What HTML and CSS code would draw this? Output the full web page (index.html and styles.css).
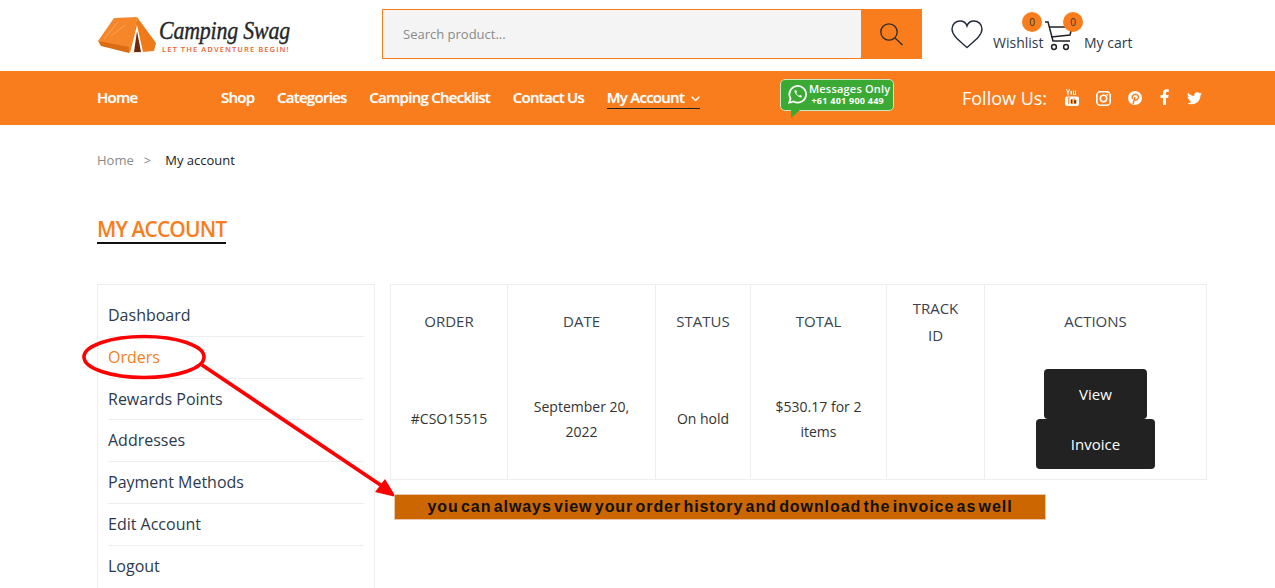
FILE: index.html
```html
<!DOCTYPE html>
<html lang="en">
<head>
<meta charset="utf-8">
<title>My account – Camping Swag</title>
<link rel="stylesheet" href="styles.css">
</head>
<body>
<div class="page">
  <header class="topbar">
    <a class="logo">
      <svg class="tent" width="60" height="38" viewBox="0 0 60 38">
        <path d="M17 2 L40 1 L34 37 L1 25 Z" fill="#f5872a"/>
        <path d="M1 25 L32 31 L32 37 L4 30 Z" fill="#d96c14"/>
        <path d="M21 6 L7 23 M28 9 L14 20" stroke="#fbb06e" stroke-width=".7" fill="none"/>
        <path d="M40 1 L59 27 L57 35 L33 37 Z" fill="#ee7a1a"/>
        <path d="M40 9 L33 37 L46 36 Z" fill="#fff"/>
        <path d="M40 15 L37 36 L44 36 Z" fill="#6d2a0c"/>
      </svg>
      <span class="logo-text">
        <span class="logo-name">Camping Swag</span>
        <span class="logo-tag">LET THE ADVENTURE BEGIN!</span>
      </span>
    </a>
    <form class="search">
      <span class="search-input">Search product...</span>
      <span class="search-btn">
        <svg width="24" height="24" viewBox="0 0 24 24" fill="none" stroke="#2b2b2b" stroke-width="1.3"><circle cx="10" cy="10" r="8.2"/><path d="M16 16 L23.5 23"/></svg>
      </span>
    </form>
    <div class="shop-links">
      <svg class="heart" width="32" height="29" viewBox="0 0 32 29" fill="none" stroke="#222b3a" stroke-width="1.4"><path d="M16 27.5 C10 22 1 16 1 9 C1 4 5 1 9 1 C12 1 15 3 16 6 C17 3 20 1 23 1 C27 1 31 4 31 9 C31 16 22 22 16 27.5 Z"/></svg>
      <span class="link-label wish">Wishlist<span class="badge">0</span></span>
      <span class="cart">
        <svg width="28" height="30" viewBox="0 0 28 30" fill="none" stroke="#222" stroke-width="1.5"><path d="M0 1 H3 L8 20 H25"/><path d="M4 6 H27 L25 14 L6 16"/><circle cx="9" cy="26" r="2.4"/><circle cx="21" cy="26" r="2.4"/></svg>
        <span class="badge">0</span>
      </span>
      <span class="link-label">My cart</span>
    </div>
  </header>

  <nav class="mainnav">
    <ul class="menu">
      <li class="m-home">Home</li>
      <li>Shop</li>
      <li>Categories</li>
      <li>Camping Checklist</li>
      <li>Contact Us</li>
      <li class="active">My Account
        <svg width="9" height="6" viewBox="0 0 9 6" fill="none" stroke="#fff" stroke-width="1.4"><path d="M.7 .8 L4.5 4.6 L8.3 .8"/></svg>
      </li>
    </ul>
    <div class="wa">
      <svg width="21" height="21" viewBox="0 0 24 24" fill="none" stroke="#fff" stroke-width="2"><path d="M2.5 21.5 L4 16.5 A9.5 9.5 0 1 1 7.5 20 Z"/><path d="M8.5 7.5 C8 10 13 16 16.5 15.5 L17 13.5 L14.8 12.5 L13.8 13.5 C12.5 13 11 11.5 10.5 10.2 L11.5 9.2 L10.5 7 Z" fill="#fff" stroke="none"/></svg>
      <span class="wa-text"><span class="wa-top">Messages Only</span><span class="wa-num">+61 401 900 449</span></span>
    </div>
    <div class="follow">
      <span class="follow-label">Follow Us:</span>
      <svg class="s-yt" width="14" height="17" viewBox="0 0 14 17"><path fill="#fff" d="M2 0 L3 3 L4 0 H5 L3.5 4 V6.5 H2.5 V4 L1 0 Z M5.5 2 H7 V5.5 H5.5 Z M8 1.5 H9 V5 H10 V1.5 H11 V6 H8 Z"/><rect fill="#fff" y="7.5" width="14" height="9.5" rx="2"/><path stroke="#f97d1c" stroke-width=".9" d="M2.5 9 H5 M3.7 9 V15 M6 10.5 V14.5 H7.5 V10.5 M9 9 V14.5 M9 11 H11 V14.5 H9"/></svg>
      <svg class="s-ig" width="15" height="15" viewBox="0 0 15 15" fill="none" stroke="#fff" stroke-width="1.6"><rect x=".8" y=".8" width="13.4" height="13.4" rx="3.5"/><circle cx="7.5" cy="7.5" r="3.2"/><circle cx="11.3" cy="3.7" r=".6" fill="#fff" stroke-width=".6"/></svg>
      <svg class="s-pi" width="14" height="14" viewBox="0 0 14 14"><circle cx="7" cy="7" r="7" fill="#fff"/><path d="M5 13 L7 6 M4.6 8 C3.2 5.2 5.2 3.2 7.4 3.2 C10 3.2 10.8 5.4 10 7.4 C9.2 9.4 7 9.4 6.4 8.2" fill="none" stroke="#f97d1c" stroke-width="1.4"/></svg>
      <svg class="s-fb" width="9" height="16" viewBox="0 0 9 16"><path fill="#fff" d="M3 16 V9 H.5 V6 H3 V4 C3 1.5 4.5 .3 6.5 .3 H8.7 V3 H7 C6.2 3 6 3.5 6 4.2 V6 H8.6 L8.2 9 H6 V16 Z"/></svg>
      <svg class="s-tw" width="15" height="13" viewBox="0 0 14 12"><path fill="#fff" d="M14 1.6 C13.5 1.8 12.9 2 12.3 2.1 C12.9 1.7 13.4 1.1 13.6 .4 C13 .7 12.4 1 11.7 1.1 C10.5 -.2 8.4 -.2 7.4 1 C6.8 1.7 6.6 2.7 6.8 3.6 C4.5 3.5 2.4 2.4 1 .6 C.2 1.9 .6 3.6 1.8 4.5 C1.3 4.5 .9 4.3 .5 4.1 C.5 5.5 1.5 6.7 2.8 7 C2.4 7.1 2 7.1 1.6 7 C2 8.2 3.1 9 4.3 9 C3.2 9.9 1.6 10.3 0 10.1 C1.3 11 2.8 11.4 4.4 11.4 C9.7 11.4 12.7 6.9 12.6 3 C13.1 2.6 13.6 2.2 14 1.6 Z"/></svg>
    </div>
  </nav>

  <main class="content">
    <div class="crumbs"><span class="crumb-home">Home</span><span class="crumb-sep">&gt;</span><span class="crumb-now">My account</span></div>
    <h1 class="title">MY ACCOUNT</h1>
    <div class="account">
      <aside class="side">
        <a class="side-item">Dashboard</a>
        <a class="side-item current">Orders</a>
        <a class="side-item">Rewards Points</a>
        <a class="side-item">Addresses</a>
        <a class="side-item">Payment Methods</a>
        <a class="side-item">Edit Account</a>
        <a class="side-item">Logout</a>
      </aside>
      <table class="orders">
        <colgroup>
          <col class="c1"><col class="c2"><col class="c3"><col class="c4"><col class="c5"><col class="c6">
        </colgroup>
        <thead>
          <tr><th>ORDER</th><th>DATE</th><th>STATUS</th><th>TOTAL</th><th>TRACK<br>ID</th><th>ACTIONS</th></tr>
        </thead>
        <tbody>
          <tr>
            <td>#CSO15515</td>
            <td>September 20,<br>2022</td>
            <td>On hold</td>
            <td>$530.17 for 2<br>items</td>
            <td></td>
            <td class="actions"><a class="btn b-view">View</a><a class="btn b-inv">Invoice</a></td>
          </tr>
        </tbody>
      </table>
    </div>
  </main>

  <svg class="markup" width="1275" height="588" viewBox="0 0 1275 588" fill="none">
    <ellipse cx="144" cy="357" rx="60" ry="20.5" stroke="#f00" stroke-width="3.6"/>
    <path d="M202 365 L385 488" stroke="#f00" stroke-width="3.8"/>
    <path d="M396 497 L375 492 L385 479 Z" fill="#f00"/>
  </svg>
  <div class="note">you can always view your order history and download the invoice as well</div>
</div>
</body>
</html>
```
FILE: styles.css
```css
* { box-sizing: border-box; }
html, body { margin: 0; padding: 0; }
body { font-family: "Open Sans", "Liberation Sans", sans-serif; background: #fff; color: #2b3a4a; overflow: hidden; }
.page { position: relative; width: 1275px; height: 588px; overflow: hidden; }

.topbar { height: 71px; display: flex; align-items: flex-start; padding-left: 97px; }
.logo { display: flex; align-items: center; width: 285px; height: 71px; padding-bottom: 1px; }
.tent { flex: none; margin-right: 2px; margin-top: -1px; }
.logo-text { display: flex; flex-direction: column; align-items: flex-start; }
.logo-name { font-family: "Liberation Serif", serif; font-style: italic; font-weight: 400; font-size: 25px; line-height: 28px; color: #26262a; letter-spacing: -.2px; -webkit-text-stroke: .4px #26262a; white-space: nowrap; transform: scaleX(.875); transform-origin: left center; }
.logo-tag { font-family: "Open Sans", sans-serif; font-size: 7.6px; line-height: 9px; margin-left: 3px; font-weight: 600; color: #ee5f2c; letter-spacing: 1.05px; white-space: nowrap; }

.search { display: flex; width: 540px; height: 50px; margin-top: 9px; border: 1px solid #f97d1c; }
.search-input { flex: 1; background: #f4f4f4; font-size: 13px; color: #8a8a8a; padding-left: 20px; line-height: 48px; }
.search-btn { width: 60px; background: #f97d1c; display: flex; align-items: center; justify-content: center; }

.shop-links { display: flex; align-items: flex-start; margin-left: 29px; }
.heart { margin-top: 20px; margin-right: 10px; }
.link-label { position: relative; font-size: 14px; line-height: 19px; margin-top: 33px; color: #2c3a4d; }
.wish { width: 52px; }
.badge { position: absolute; width: 20px; height: 20px; border-radius: 50%; background: #f97d1c; color: #333; font-size: 10px; line-height: 20px; text-align: center; }
.wish .badge { left: 29px; top: -21px; }
.cart { position: relative; width: 39px; height: 40px; margin-top: 21px; }
.cart .badge { left: 18px; top: -9px; }

.mainnav { height: 54px; background: #f97d1c; display: flex; align-items: center; padding-left: 97px; color: #fff; }
.menu { list-style: none; margin: 0; padding: 0; display: flex; gap: 22.6px; width: 683px; font-size: 15px; line-height: 20px; font-weight: 600; letter-spacing: -.72px; text-shadow: 0 0 1px rgba(255,255,255,.55); }
.m-home { width: 101.4px; }
.active { border-bottom: 1px solid #222; padding-bottom: 1px; }
.active svg { margin-left: 4px; vertical-align: 1px; }
.wa { width: 114px; height: 32px; margin-top: -7px; background: #3aaa35; border-radius: 5px; border: 1px solid #c8e6c0; position: relative; display: flex; align-items: center; padding-left: 6px; gap: 1px; flex: none; }
.wa::after { content: ""; position: absolute; left: 10px; bottom: -8px; border-right: 9px solid transparent; border-top: 8px solid #3aaa35; }
.wa-text { display: flex; flex-direction: column; align-items: center; line-height: 12px; }
.wa-top { font-size: 11px; font-weight: 600; letter-spacing: .2px; white-space: nowrap; }
.wa-num { font-size: 9px; font-weight: 700; letter-spacing: .25px; white-space: nowrap; margin-right: 4px; }
.follow { display: flex; align-items: center; margin-left: 68px; }
.follow-label { font-size: 18px; margin-right: 18px; }
.s-yt { margin-right: 17px; margin-top: -1px; }
.s-ig { margin-right: 17px; }
.s-pi { margin-right: 18px; }
.s-fb { margin-right: 18px; margin-top: -2px; }

.content { padding: 0 68px 0 97px; }
.crumbs { display: flex; font-size: 13px; line-height: 18px; margin-top: 26px; }
.crumb-home { color: #8a8a8a; }
.crumb-sep { color: #8a8a8a; margin: 0 14px 0 10px; }
.crumb-now { color: #222; }
.title { display: inline-block; margin: 47px 0 0; font-size: 21px; font-weight: 600; line-height: 26px; letter-spacing: -.9px; color: #f97d1c; border-bottom: 2px solid #111; }

.account { display: flex; gap: 15px; align-items: flex-start; margin-top: 40px; }
.side { width: 278px; flex: none; border: 1px solid #eee; padding: 10px 10px 0; height: 320px; }
.side-item { display: block; height: 41.8px; font-size: 16px; line-height: 41px; color: #2b3a4f; border-bottom: 1px solid #eee; }
.side-item:last-child { border-bottom: 0; }
.current { color: #f97d1c; }

.orders { width: 816px; table-layout: fixed; border-collapse: collapse; border: 1px solid #eee; font-size: 14px; color: #333; text-align: center; }
.orders th, .orders td { border-left: 1px solid #eee; border-right: 1px solid #eee; padding: 0; font-weight: 400; }
.orders thead tr { height: 76px; }
.orders th { font-size: 15px; line-height: 27px; padding-bottom: 2px; color: #3a4250; vertical-align: middle; }
.orders td { line-height: 25px; vertical-align: middle; padding-bottom: 2px; }
.orders tbody tr { height: 118px; }
.c1 { width: 117px; } .c2 { width: 148px; } .c3 { width: 95px; } .c4 { width: 136px; } .c5 { width: 98px; } .c6 { width: 222px; }
.orders td.actions { padding: 8px 0 10px; line-height: 0; }
.btn { display: block; height: 50px; margin: 0 auto; background: #222; color: #fff; border-radius: 4px; font-size: 15px; line-height: 50px; font-weight: 400; }
.b-view { width: 103px; line-height: 51px; font-weight: 500; }
.b-inv { width: 119px; }

.markup { position: absolute; left: 0; top: 0; pointer-events: none; }
.note { position: absolute; left: 394px; top: 494px; width: 652px; height: 26px; background: #cc6600; border: 1px solid #e8c8a8; color: #111; font-family: "Liberation Sans", Arial, sans-serif; font-weight: 700; font-size: 16px; line-height: 24px; letter-spacing: .92px; word-spacing: -3px; text-align: center; white-space: nowrap; }
```
